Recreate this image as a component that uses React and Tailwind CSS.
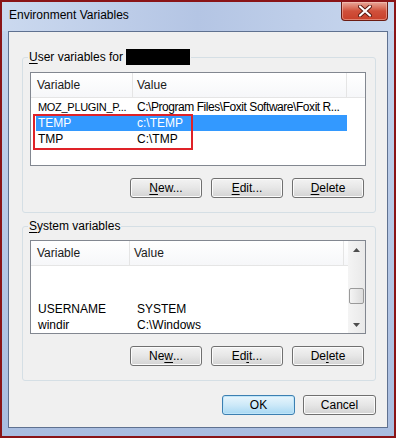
import React from "react";

const font = "font-['Liberation_Sans','Open_Sans',sans-serif]";

function CloseButton() {
  return (
    <div className="w-[47px] h-[19px] rounded-b-[4px] border border-t-0 border-[#6b1c13] bg-linear-to-b from-[#e7a89b] via-[#d0503b] to-[#c8402a] shadow-[inset_0_0_0_1px_rgba(255,210,200,0.45)] flex items-center justify-center">
      <svg width="14" height="12" viewBox="0 0 14 12">
        <path d="M2 1.5 L12 10.5 M12 1.5 L2 10.5" stroke="#5a1810" strokeWidth="4" strokeLinecap="round" />
        <path d="M2 1.5 L12 10.5 M12 1.5 L2 10.5" stroke="#ffffff" strokeWidth="2.2" strokeLinecap="round" />
      </svg>
    </div>
  );
}

function WinButton({ children, primary = false, className = "" }) {
  return (
    <button
      className={
        "h-[20px] w-[72px] rounded-[3px] border text-[12px] leading-none text-black flex items-center justify-center " +
        (primary
          ? "border-[#3c7fb1] bg-linear-to-b from-[#e8f5fc] via-[#cde9f8] to-[#a8d8f3] shadow-[inset_0_0_0_1px_#bfe5f9] "
          : "border-[#707070] bg-linear-to-b from-[#f3f3f3] via-[#e6e6e6] to-[#d3d3d3] shadow-[inset_0_0_0_1px_#fbfbfb] ") +
        className
      }
    >
      {children}
    </button>
  );
}

function U({ children }) {
  return <span className="underline underline-offset-[2px]">{children}</span>;
}

function ButtonRow({ sys = false }) {
  return (
    <div className="mt-[12px] flex justify-end gap-[9px] pr-[2px]">
      {sys ? (
        <>
          <WinButton>
            Ne<U>w</U>...
          </WinButton>
          <WinButton>
            Ed<U>i</U>t...
          </WinButton>
          <WinButton>
            De<U>l</U>ete
          </WinButton>
        </>
      ) : (
        <>
          <WinButton>
            <U>N</U>ew...
          </WinButton>
          <WinButton>
            <U>E</U>dit...
          </WinButton>
          <WinButton>
            <U>D</U>elete
          </WinButton>
        </>
      )}
    </div>
  );
}

function Row({ name, value, selected = false, tight = false }) {
  return (
    <div
      className={
        "ml-[5px] w-[311px] h-[16px] flex items-center leading-[16px] whitespace-nowrap " +
        (selected ? "bg-[#3399ff] text-white" : "text-black")
      }
    >
      <div className={"w-[100px] shrink-0 pl-[2px] " + (tight ? "text-[11px] tracking-[-0.3px]" : "")}>{name}</div>
      <div className={"pl-[1px] " + (tight ? "tracking-[-0.45px]" : "")}>{value}</div>
    </div>
  );
}

function Header({ col1, width }) {
  return (
    <div className="h-[25px] flex border-b border-[#e5e5e5] bg-linear-to-b from-[#ffffff] to-[#f6f7f9] text-[#1a1a1a]" style={{ width }}>
      <div className="h-full flex items-center pl-[6px] border-r border-[#e5e5e5]" style={{ width: col1 }}>
        Variable
      </div>
      <div className="w-[214px] h-full flex items-center pl-[4px] border-r border-[#e5e5e5]">Value</div>
      <div className="flex-1" />
    </div>
  );
}

const userVars = [
  { name: "MOZ_PLUGIN_P...", value: "C:\\Program Files\\Foxit Software\\Foxit R...", tight: true },
  { name: "TEMP", value: "c:\\TEMP", selected: true },
  { name: "TMP", value: "C:\\TMP" },
];

const sysVars = [
  { name: "USERNAME", value: "SYSTEM" },
  { name: "windir", value: "C:\\Windows" },
];

export default function App() {
  return (
    <div className={"w-[396px] h-[438px] border-2 border-[#8a1417] bg-[#b9cbe8] flex flex-col text-[12px] " + font}>
      <div className="h-[29px] flex items-start justify-between pl-[7px] pr-[6px] bg-linear-to-r from-[#cbd9ef] via-[#b4c5e4] to-[#c8d7ee]">
        <span className="mt-[5px] leading-[16px] text-black">Environment Variables</span>
        <CloseButton />
      </div>
      <div className="flex-1 px-[6px] pb-[8px] bg-linear-to-b from-[#c3d3ec] to-[#a9bde0]">
        <div className="h-full border border-[#5f7190] bg-[#f0f0f0] flex flex-col">
          <fieldset className="mt-[17px] ml-[13px] w-[354px] border border-[#d5dfe5] rounded-[3px] pl-[7px] pr-[9px] pt-[7px] pb-[14px]">
            <legend className="-ml-[2px] px-[1px] leading-[16px] text-black flex items-center">
              <span>
                <U>U</U>ser variables for
              </span>
              <span className="ml-[3px] inline-block w-[64px] h-[16px] bg-black" />
            </legend>
            <div className="relative w-[336px] h-[94px] border border-[#828790] bg-white">
              <Header col1="102px" width="334px" />
              <div className="pt-[1px]">
                {userVars.map((v) => (
                  <Row key={v.name} {...v} />
                ))}
              </div>
              <div className="absolute left-[2px] top-[41px] w-[160px] h-[36px] border-2 border-[#df2228]" />
            </div>
            <ButtonRow />
          </fieldset>

          <fieldset className="mt-[5px] ml-[13px] w-[354px] border border-[#d5dfe5] rounded-[3px] pl-[7px] pr-[9px] pt-[6px] pb-[14px]">
            <legend className="-ml-[2px] px-[1px] leading-[16px] text-black">
              <U>S</U>ystem variables
            </legend>
            <div className="w-[336px] h-[94px] border border-[#828790] bg-white flex overflow-hidden">
              <div className="w-[317px]">
                <Header col1="99px" width="317px" />
                <div className="h-[35px]" />
                {sysVars.map((v) => (
                  <Row key={v.name} {...v} />
                ))}
              </div>
              <div className="w-[17px] h-full bg-linear-to-r from-[#f4f4f4] to-[#e9e9e9] flex flex-col items-center">
                <div className="h-[17px] flex items-center justify-center">
                  <svg width="7" height="4" viewBox="0 0 7 4">
                    <path d="M0 4 L3.5 0 L7 4 Z" fill="#4d4d4d" />
                  </svg>
                </div>
                <div className="flex-1" />
                <div className="w-[15px] h-[16px] mb-[12px] rounded-[2px] border border-[#9a9a9a] bg-linear-to-r from-[#f4f4f4] to-[#dcdcdc]" />
                <div className="h-[17px] flex items-center justify-center">
                  <svg width="7" height="4" viewBox="0 0 7 4">
                    <path d="M0 0 L7 0 L3.5 4 Z" fill="#4d4d4d" />
                  </svg>
                </div>
              </div>
            </div>
            <ButtonRow sys />
          </fieldset>

          <div className="mt-[14px] flex justify-end gap-[8px] pr-[11px]">
            <WinButton primary className="w-[73px]">
              OK
            </WinButton>
            <WinButton className="w-[73px]">Cancel</WinButton>
          </div>
        </div>
      </div>
    </div>
  );
}
